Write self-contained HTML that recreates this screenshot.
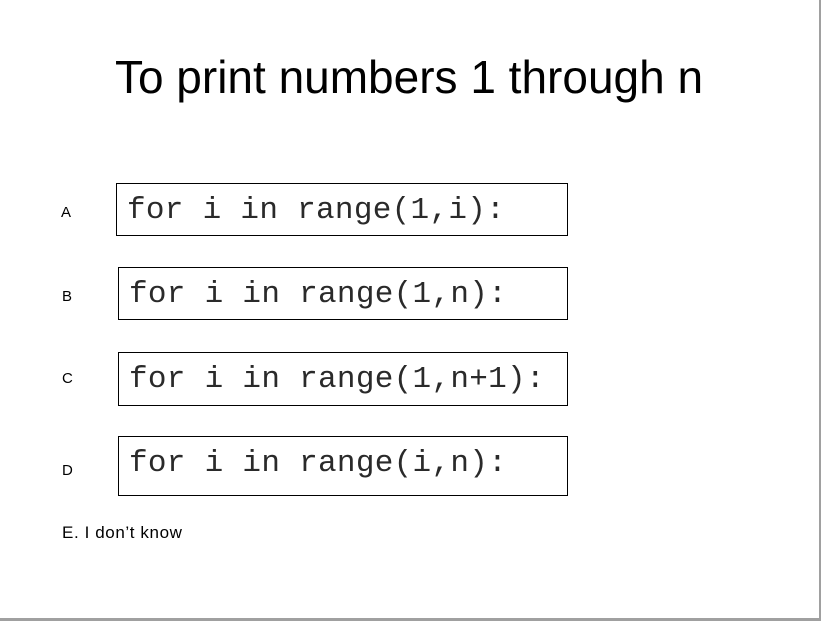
<!DOCTYPE html>
<html><head><style>
body{margin:0;width:821px;height:621px;background:#fff;position:relative;overflow:hidden;font-family:"Liberation Sans",sans-serif}
.t{position:absolute;left:0;width:818px;text-align:center;top:50px;font-size:46px;color:#000}
.l{position:absolute;font-size:15px;color:#000}
.b{position:absolute;border:1px solid #000;box-sizing:border-box}
.c{position:absolute;font-family:"Liberation Mono",monospace;font-size:31px;color:#2a2a2a;white-space:pre;letter-spacing:0.3px}
</style></head><body>
<div class="t">To print numbers 1 through n</div>
<div class="l" style="left:61px;top:204px">A</div>
<div class="l" style="left:62px;top:288px">B</div>
<div class="l" style="left:62px;top:370px">C</div>
<div class="l" style="left:62px;top:462px">D</div>
<div class="b" style="left:116px;top:183px;width:452px;height:53px"></div>
<div class="b" style="left:118px;top:267px;width:450px;height:53px"></div>
<div class="b" style="left:118px;top:352px;width:450px;height:54px"></div>
<div class="b" style="left:118px;top:436px;width:450px;height:60px"></div>
<div class="c" style="left:127px;top:193px">for i in range(1,i):</div>
<div class="c" style="left:129px;top:277px">for i in range(1,n):</div>
<div class="c" style="left:129px;top:362px">for i in range(1,n+1):</div>
<div class="c" style="left:129px;top:446px">for i in range(i,n):</div>
<div class="l" style="left:62px;top:523px;font-size:17px;letter-spacing:0.6px">E. I don’t know</div>
<div style="position:absolute;left:819px;top:0;width:2px;height:621px;background:#a0a0a0"></div>
<div style="position:absolute;left:0;top:618px;width:821px;height:3px;background:#a0a0a0"></div>
</body></html>
